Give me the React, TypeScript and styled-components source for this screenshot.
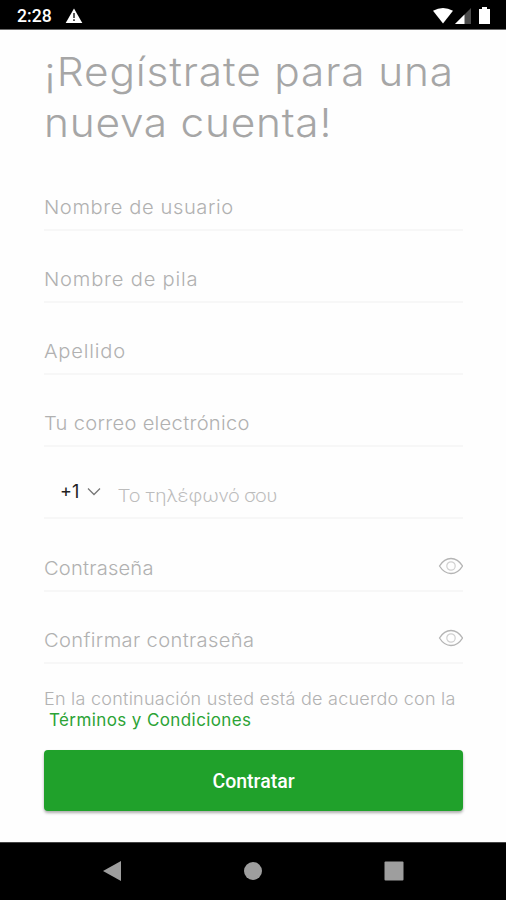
import React from "react";
import styled, { createGlobalStyle } from "styled-components";

const GlobalStyle = createGlobalStyle`
  * { box-sizing: border-box; }
  body { margin: 0; background: #fefefe; }
`;

const Screen = styled.div`
  width: 506px;
  height: 900px;
  display: flex;
  flex-direction: column;
  background: #fefefe;
  font-family: Inter, "Open Sans", sans-serif;
  overflow: hidden;
`;

const StatusBar = styled.header`
  height: 30px;
  flex: none;
  display: flex;
  align-items: center;
  padding: 2px 16px 0 17px;
  background: #000;
  border-bottom: 1px solid #6b6b6b;
  color: #fff;
`;

const Clock = styled.time`
  width: 48px;
  font: 500 17.6px/28px Roboto, sans-serif;
`;

const StatusIcons = styled.div`
  display: flex;
  align-items: center;
  margin-left: auto;
`;

const Glyph = styled.svg<{ $gap?: number }>`
  display: block;
  flex: none;
  margin-left: ${(p) => p.$gap ?? 0}px;
`;

const Content = styled.main`
  flex: 1;
  display: flex;
  flex-direction: column;
  padding: 17px 43px 0 44px;
`;

const Title = styled.h1`
  height: 112px;
  margin: 0;
  color: #a6a6a6;
  font-size: 40px;
  font-weight: 300;
  line-height: 50.5px;
`;

const Line = styled.span<{ $spacing: number }>`
  display: block;
  white-space: nowrap;
  letter-spacing: ${(p) => p.$spacing}px;
  transform: scaleX(1.06);
  transform-origin: left;
`;

const Field = styled.div`
  height: 72.1px;
  flex: none;
  display: flex;
  align-items: flex-end;
  padding-bottom: 8px;
  border-bottom: 2px solid #f7f7f7;
`;

const Label = styled.label<{ $greek?: boolean }>`
  flex: 1;
  color: ${(p) => (p.$greek ? "#bcbcbc" : "#b1b1b1")};
  font-family: ${(p) => (p.$greek ? "Roboto" : "Inter")}, sans-serif;
  font-size: 19px;
  font-weight: 300;
  line-height: 26px;
`;

const Prefix = styled.button`
  width: 74px;
  height: 35px;
  display: flex;
  align-items: center;
  padding: 0 0 0 16px;
  border: 0;
  background: none;
  color: #222;
  font: 400 18px/26px Inter, sans-serif;
`;

const Terms = styled.p`
  margin: 25px 0 0;
  height: 61px;
  color: #b2b2b2;
  font-size: 17px;
  font-weight: 300;
  line-height: 21px;
`;

const TermsLink = styled.a<{ $spacing: number }>`
  display: block;
  padding-left: 5px;
  color: #2ba336;
  font-weight: 400;
  letter-spacing: ${(p) => p.$spacing}px;
`;

const Submit = styled.button`
  height: 61px;
  flex: none;
  padding: 4px 0 0;
  border: 0;
  border-radius: 4px;
  background: #20a12b;
  box-shadow: 0 2px 3px rgba(0, 0, 0, 0.32);
  color: #fff;
  font: 500 19.5px/24px Roboto, sans-serif;
`;

const NavBar = styled.nav`
  height: 58px;
  flex: none;
  display: flex;
  align-items: center;
  justify-content: space-between;
  padding: 0 102px 1px;
  background: #000;
  border-top: 1px solid #444;
`;

const Eye = () => (
  <Glyph width="25" height="28" viewBox="0 0 25 28" fill="none">
    <path d="M1.500 12C4 8 8.500 4.500 13 4.500s9 3.500 11.500 7.500C22 16 17.500 19.500 13 19.500S4 16 1.500 12Z" stroke="#b4b4b4" strokeWidth="1.300" />
    <circle cx="13" cy="12" r="4.200" stroke="#d0d0d0" strokeWidth="1.200" />
  </Glyph>
);

const fields = [
  { text: "Nombre de usuario", spacing: 0.55 },
  { text: "Nombre de pila", spacing: 0.75 },
  { text: "Apellido", spacing: 0.75 },
  { text: "Tu correo electrónico", spacing: 0.28 },
];

const passwordFields = [
  { text: "Contraseña", spacing: 0.18 },
  { text: "Confirmar contraseña", spacing: 0.33 },
];

export default function App() {
  return (
    <Screen>
      <GlobalStyle />
      <StatusBar>
        <Clock>2:28</Clock>
        <Glyph width="18" height="16" viewBox="0 0 18 16">
          <path d="M9 0.500 17.300 15H0.700Z" fill="#fff" />
          <path d="M9 5v5M9 11.300v1.700" stroke="#222" strokeWidth="1.500" />
        </Glyph>
        <StatusIcons>
          <Glyph width="20" height="16" viewBox="0 0 20 16">
            <path d="M0 2.800Q10-2.800 20 2.800L10 15.500Z" fill="#fff" />
          </Glyph>
          <Glyph $gap={2} width="16" height="16" viewBox="0 0 16 16">
            <path d="M0 16 16 0V16Z" fill="#4b4b4b" />
            <path d="M0 16 9.500 6.500V16Z" fill="#fff" />
          </Glyph>
          <Glyph $gap={8} width="11" height="17" viewBox="0 0 11 17">
            <path d="M3 0h5v2h3v15H0V2h3Z" fill="#fff" />
          </Glyph>
        </StatusIcons>
      </StatusBar>
      <Content>
        <Title>
          <Line $spacing={0.8}>¡Regístrate para una</Line>
          <Line $spacing={0.7}>nueva cuenta!</Line>
        </Title>
        {fields.map((f) => (
          <Field key={f.text}>
            <Label>
              <Line $spacing={f.spacing}>{f.text}</Line>
            </Label>
          </Field>
        ))}
        <Field>
          <Prefix>
            +1
            <Glyph $gap={8} width="14" height="10" viewBox="0 0 14 10" fill="none">
              <path d="m1 1.500 6 6 6-6" stroke="#777" strokeWidth="1.300" />
            </Glyph>
          </Prefix>
          <Label $greek>
            <Line $spacing={-0.05}>Το τηλέφωνό σου</Line>
          </Label>
        </Field>
        {passwordFields.map((f) => (
          <Field key={f.text}>
            <Label>
              <Line $spacing={f.spacing}>{f.text}</Line>
            </Label>
            <Eye />
          </Field>
        ))}
        <Terms>
          <Line $spacing={0.22}>En la continuación usted está de acuerdo con la</Line>
          <TermsLink $spacing={0.4}>Términos y Condiciones</TermsLink>
        </Terms>
        <Submit>Contratar</Submit>
      </Content>
      <NavBar>
        <Glyph width="20" height="22" viewBox="0 0 20 22">
          <path d="M1 11 19 1V21Z" fill="#9e9e9e" />
        </Glyph>
        <Glyph width="20" height="20" viewBox="0 0 20 20">
          <circle cx="10" cy="10" r="9" fill="#9e9e9e" />
        </Glyph>
        <Glyph width="20" height="20" viewBox="0 0 20 20">
          <rect x="0.500" y="0.500" width="19" height="19" rx="1" fill="#9e9e9e" />
        </Glyph>
      </NavBar>
    </Screen>
  );
}
